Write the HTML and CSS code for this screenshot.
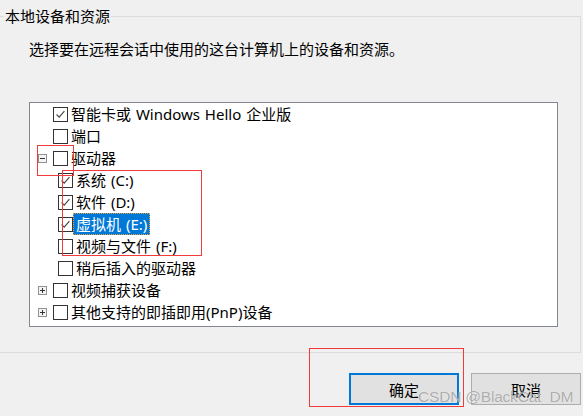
FILE: index.html
```
<!DOCTYPE html>
<html lang="zh-CN">
<head>
    <meta charset="UTF-8">
    <title>本地设备和资源</title>
    <link rel="stylesheet" href="styles.css">
</head>
<body>
    <div class="group">
        <span class="group-title">本地设备和资源</span>
        <p class="desc">选择要在远程会话中使用的这台计算机上的设备和资源。</p>
        <ul class="tree">
            <li class="row">
                <span class="exp"></span>
                <span class="check on"><svg viewBox="0 0 15 15"><polyline points="3,7.5 6,10.5 12,3.5"/></svg></span>
                <span class="label">智能卡或 Windows Hello 企业版</span>
            </li>
            <li class="row">
                <span class="exp"></span>
                <span class="check"></span>
                <span class="label">端口</span>
            </li>
            <li class="row">
                <span class="exp"><svg viewBox="0 0 9 9"><rect x="0.5" y="0.5" width="8" height="8"/><line x1="2" y1="4.5" x2="7" y2="4.5"/></svg></span>
                <span class="check"></span>
                <span class="label">驱动器</span>
            </li>
            <li class="row sub">
                <span class="exp"></span>
                <span class="check on"><svg viewBox="0 0 15 15"><polyline points="3,7.5 6,10.5 12,3.5"/></svg></span>
                <span class="label">系统 (C:)</span>
            </li>
            <li class="row sub">
                <span class="exp"></span>
                <span class="check on"><svg viewBox="0 0 15 15"><polyline points="3,7.5 6,10.5 12,3.5"/></svg></span>
                <span class="label">软件 (D:)</span>
            </li>
            <li class="row sub">
                <span class="exp"></span>
                <span class="check on"><svg viewBox="0 0 15 15"><polyline points="3,7.5 6,10.5 12,3.5"/></svg></span>
                <span class="label selected">虚拟机 (E:)</span>
            </li>
            <li class="row sub">
                <span class="exp"></span>
                <span class="check"></span>
                <span class="label">视频与文件 (F:)</span>
            </li>
            <li class="row sub">
                <span class="exp"></span>
                <span class="check"></span>
                <span class="label">稍后插入的驱动器</span>
            </li>
            <li class="row">
                <span class="exp"><svg viewBox="0 0 9 9"><rect x="0.5" y="0.5" width="8" height="8"/><line x1="2" y1="4.5" x2="7" y2="4.5"/><line x1="4.5" y1="2" x2="4.5" y2="7"/></svg></span>
                <span class="check"></span>
                <span class="label">视频捕获设备</span>
            </li>
            <li class="row">
                <span class="exp"><svg viewBox="0 0 9 9"><rect x="0.5" y="0.5" width="8" height="8"/><line x1="2" y1="4.5" x2="7" y2="4.5"/><line x1="4.5" y1="2" x2="4.5" y2="7"/></svg></span>
                <span class="check"></span>
                <span class="label">其他支持的即插即用(PnP)设备</span>
            </li>
        </ul>
    </div>

    <div class="buttons">
        <button class="btn default">确定</button>
        <button class="btn">取消</button>
    </div>

    <div class="mark mark-drive"></div>
    <div class="mark mark-sub"></div>
    <div class="mark mark-ok"></div>
    <span class="watermark">CSDN @BlackCat_DM</span>
</body>
</html>
```

FILE: styles.css
```
html, body {
    margin: 0;
    padding: 0;
    height: 100%;
    overflow: hidden;
}

body {
    background-color: #f0f0f0;
    font-family: "Noto Sans", "Noto Sans CJK SC", sans-serif;
    font-size: 15px;
    color: #000;
    position: relative;
}

.group {
    margin-top: 16px;
    width: 581px;
    height: 337px;
    box-sizing: border-box;
    border: 1px solid #dcdcdc;
    border-left: none;
}

.group-title {
    display: inline-block;
    margin: -11px 0 0 4px;
    padding: 0 1px;
    line-height: 20px;
    background-color: #f0f0f0;
    vertical-align: top;
}

.desc {
    margin: 2px 0 0 29px;
    line-height: 20px;
}

.tree {
    list-style: none;
    margin: 43px 0 0 29px;
    padding: 0;
    width: 529px;
    height: 225px;
    box-sizing: border-box;
    border: 1px solid #828790;
    background-color: #fff;
}

.row {
    display: flex;
    align-items: center;
    height: 22px;
    padding-left: 8px;
    white-space: nowrap;
}

.row.sub {
    padding-left: 28px;
}

.exp {
    width: 9px;
    height: 9px;
    margin-right: 6px;
}

.row.sub .exp {
    display: none;
}

.exp svg {
    display: block;
    width: 9px;
    height: 9px;
}

.exp rect {
    fill: #f4f4f4;
    stroke: #919191;
    stroke-width: 1;
}

.exp line {
    stroke: #333;
    stroke-width: 1;
}

.check {
    width: 15px;
    height: 15px;
    box-sizing: border-box;
    border: 1px solid #333;
    background-color: #fff;
    flex: none;
}

.check svg {
    display: block;
    width: 13px;
    height: 13px;
}

.check polyline {
    fill: none;
    stroke: #444;
    stroke-width: 1.3;
}

.label {
    padding: 0 2px;
    line-height: 20px;
    border: 1px solid transparent;
    word-spacing: 1px;
}

.label.selected {
    background-color: #0078d7;
    color: #fff;
    border: 1px dotted #e8a33c;
}

.buttons {
    display: flex;
    gap: 12px;
    margin: 20px 0 0 349px;
}

.btn {
    font-family: inherit;
    font-size: 15px;
    width: 110px;
    height: 32px;
    background-color: #e1e1e1;
    border: 1px solid #adadad;
    padding: 0;
    color: #000;
    flex: none;
}

.btn.default {
    border: 2px solid #0078d7;
}

.mark {
    position: absolute;
    border: 1px solid #f23a3a;
}

.mark-drive {
    left: 37px;
    top: 145px;
    width: 35px;
    height: 29px;
}

.mark-sub {
    left: 62px;
    top: 170px;
    width: 138px;
    height: 84px;
}

.mark-ok {
    left: 309px;
    top: 348px;
    width: 153px;
    height: 57px;
}

.watermark {
    position: absolute;
    left: 418px;
    top: 388px;
    white-space: nowrap;
    font-family: "Liberation Sans", sans-serif;
    font-size: 15.5px;
    letter-spacing: -0.2px;
    color: rgba(130, 130, 130, 0.65);
    text-shadow: 0 0 1px rgba(255, 255, 255, 0.9);
}
```
